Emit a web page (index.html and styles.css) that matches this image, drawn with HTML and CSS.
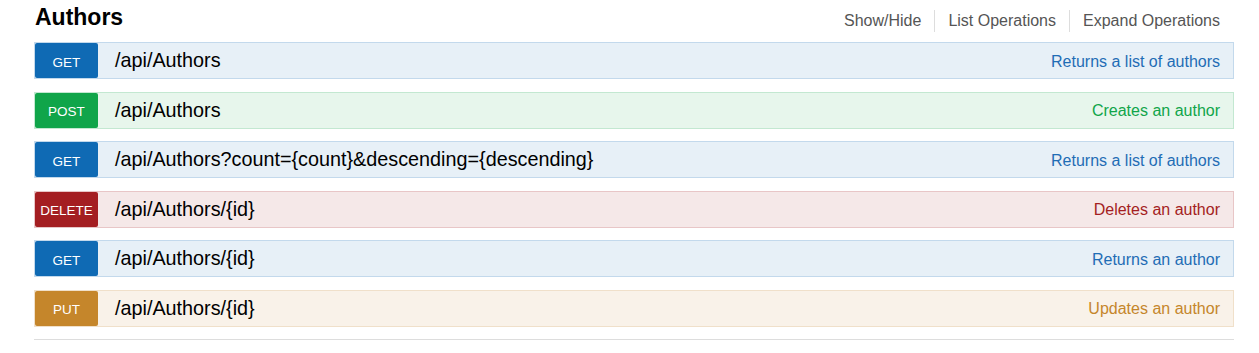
FILE: index.html
```html
<!DOCTYPE html>
<html>
<head>
<meta charset="utf-8">
<link rel="stylesheet" href="styles.css">
</head>
<body>
<div class="resource">
  <div class="heading">
    <h2 class="title">Authors</h2>
    <ul class="options">
      <li><a>Show/Hide</a></li>
      <li><a>List Operations</a></li>
      <li><a>Expand Operations</a></li>
    </ul>
  </div>
  <div class="operations">
    <div class="op get">
      <span class="method">GET</span>
      <span class="path">/api/Authors</span>
      <span class="desc">Returns a list of authors</span>
    </div>
    <div class="op post">
      <span class="method">POST</span>
      <span class="path">/api/Authors</span>
      <span class="desc">Creates an author</span>
    </div>
    <div class="op get">
      <span class="method">GET</span>
      <span class="path">/api/Authors?count={count}&amp;descending={descending}</span>
      <span class="desc">Returns a list of authors</span>
    </div>
    <div class="op delete">
      <span class="method">DELETE</span>
      <span class="path">/api/Authors/{id}</span>
      <span class="desc">Deletes an author</span>
    </div>
    <div class="op get">
      <span class="method">GET</span>
      <span class="path">/api/Authors/{id}</span>
      <span class="desc">Returns an author</span>
    </div>
    <div class="op put">
      <span class="method">PUT</span>
      <span class="path">/api/Authors/{id}</span>
      <span class="desc">Updates an author</span>
    </div>
    <div class="rule"></div>
  </div>
</div>
</body>
</html>
```
FILE: styles.css
```css
* { box-sizing: border-box; }
body {
  margin: 0;
  background: #fff;
  font-family: "Liberation Sans", Arial, sans-serif;
}
.resource {
  width: 1200px;
  margin-left: 34px;
}
.heading {
  height: 42px;
  display: flex;
  justify-content: space-between;
  align-items: flex-start;
}
.title {
  margin: 2px 0 0 1px;
  font-size: 23px;
  line-height: 30px;
  font-weight: bold;
  color: #000;
}
.options {
  list-style: none;
  margin: 10px 14px 0 0;
  padding: 0;
  display: flex;
}
.options li {
  font-size: 16px;
  line-height: 22px;
  padding: 0 13px;
  color: #555;
}
.options li:first-child { padding-left: 0; }
.options li + li { border-left: 1px solid #ddd; }
.options li:last-child { padding-right: 0; }
.operations {
  display: flex;
  flex-direction: column;
  gap: 12.5px;
}
.op {
  height: 37px;
  display: flex;
  align-items: center;
  border: 1px solid;
}
.method {
  width: 63px;
  height: 100%;
  display: flex;
  align-items: center;
  justify-content: center;
  padding-top: 3px;
  color: #fff;
  font-size: 13.5px;
  border-radius: 2px;
}
.path {
  margin-left: 17px;
  font-size: 19.8px;
  color: #000;
  flex: 1;
}
.desc {
  font-size: 16px;
  margin-right: 13px;
  padding-top: 2px;
}
.get { background: #e7f0f7; border-color: #c3d9ec; }
.get .method { background: #0f6ab4; }
.get .desc { color: #1f6db5; }
.post { background: #e7f6ec; border-color: #c3e8d1; }
.post .method { background: #10a54a; }
.post .desc { color: #10a54a; }
.delete { background: #f5e8e8; border-color: #e8c6c7; }
.delete .method { background: #a41e22; }
.delete .desc { color: #a41e22; }
.put { background: #f9f2e9; border-color: #f0e0ca; }
.put .method { background: #c5862b; }
.put .desc { color: #c5862b; }
.rule {
  height: 1px;
  background: #ddd;
}
```
